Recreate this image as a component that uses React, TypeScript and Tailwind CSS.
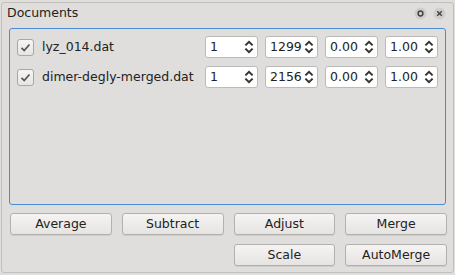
import React from "react";

type Doc = { name: string; start: string; end: string; scale: string; factor: string };

const docs: Doc[] = [
  { name: "lyz_014.dat", start: "1", end: "1299", scale: "0.00", factor: "1.00" },
  { name: "dimer-degly-merged.dat", start: "1", end: "2156", scale: "0.00", factor: "1.00" },
];

function SpinArrows() {
  return (
    <svg width="10" height="16" viewBox="0 0 10 16" className="shrink-0">
      <path d="M1.4 6.4 L5 2.8 L8.6 6.4" fill="none" stroke="#333" strokeWidth="2" />
      <path d="M1.4 9.6 L5 13.2 L8.6 9.6" fill="none" stroke="#333" strokeWidth="2" />
    </svg>
  );
}

function SpinBox({ value }: { value: string }) {
  return (
    <div className="w-[53px] h-[22px] bg-white border border-[#bdbbb8] rounded-[3px] flex items-center pl-[4px] pr-[3px]">
      <span className="flex-1 text-[12.5px] text-[#222]">{value}</span>
      <SpinArrows />
    </div>
  );
}

function CheckBox() {
  return (
    <div className="w-[17px] h-[17px] rounded-[3px] border border-[#a9a7a4] bg-gradient-to-b from-[#f6f5f4] to-[#e6e5e3] flex items-center justify-center shrink-0">
      <svg width="11" height="11" viewBox="0 0 11 11">
        <path d="M1.5 5.8 L4.2 8.5 L9.5 2.5" fill="none" stroke="#555" strokeWidth="1.7" />
      </svg>
    </div>
  );
}

function Btn({ label }: { label: string }) {
  return (
    <button className="h-[22px] rounded-[3px] border border-[#b3b1ae] bg-gradient-to-b from-[#f5f4f3] to-[#e5e4e2] shadow-[0_1px_0_rgba(0,0,0,0.08)] text-[12.5px] text-[#222] flex items-center justify-center">
      {label}
    </button>
  );
}

export default function App() {
  return (
    <div
      className="w-[455px] h-[275px] bg-[#dfdedc] pl-[1px] pt-[2px] overflow-hidden"
      style={{ fontFamily: '"DejaVu Sans", sans-serif' }}
    >
      <div className="w-[453px] h-[271px] border border-[#c2c0bd] rounded-[3px] flex flex-col">
        <div className="h-[20px] flex items-center justify-between pl-[5px] pr-[7px]">
          <span className="text-[12.5px] text-[#222]">Documents</span>
          <div className="flex items-center gap-[6px]">
            <svg width="13" height="13" viewBox="0 0 13 13">
              <circle cx="6.5" cy="6.5" r="6" fill="#d0cecb" />
              <circle cx="6.5" cy="6.5" r="2.4" fill="none" stroke="#444" strokeWidth="1.5" />
            </svg>
            <svg width="13" height="13" viewBox="0 0 13 13">
              <circle cx="6.5" cy="6.5" r="6" fill="#d0cecb" />
              <path d="M4.2 4.2 L8.8 8.8 M8.8 4.2 L4.2 8.8" stroke="#444" strokeWidth="1.5" />
            </svg>
          </div>
        </div>

        <div className="mx-[7px] mt-[5px] h-[177px] border border-[#4a8ad6] rounded-[3px] pl-[7px] pr-[7px] pt-[7px] flex flex-col gap-[8px]">
          {docs.map((d) => (
            <div key={d.name} className="h-[22px] flex items-center">
              <CheckBox />
              <span className="ml-[8px] flex-1 text-[12.5px] text-[#222] whitespace-nowrap">{d.name}</span>
              <div className="flex gap-[7px]">
                <SpinBox value={d.start} />
                <SpinBox value={d.end} />
                <SpinBox value={d.scale} />
                <SpinBox value={d.factor} />
              </div>
            </div>
          ))}
        </div>

        <div className="grid grid-cols-4 gap-x-[10px] gap-y-[9px] pl-[8px] pr-[6px] mt-[8px]">
          <Btn label="Average" />
          <Btn label="Subtract" />
          <Btn label="Adjust" />
          <Btn label="Merge" />
          <div />
          <div />
          <Btn label="Scale" />
          <Btn label="AutoMerge" />
        </div>
      </div>
    </div>
  );
}
